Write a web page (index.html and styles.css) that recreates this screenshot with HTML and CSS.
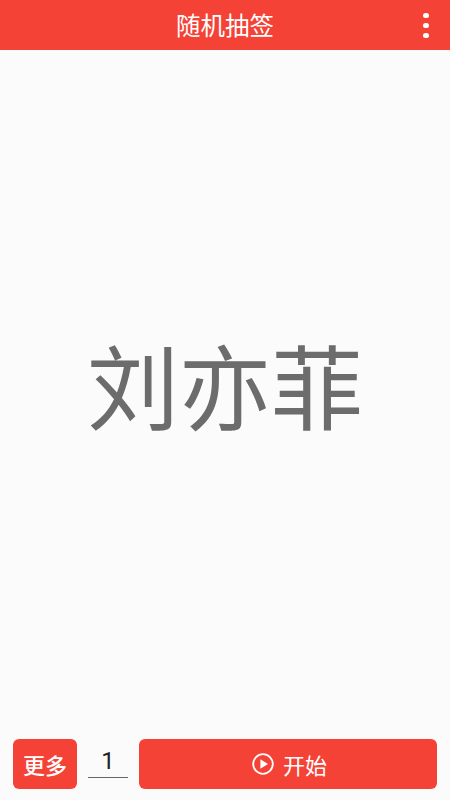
FILE: index.html
```html
<!DOCTYPE html>
<html lang="zh-CN">
<head>
    <meta charset="UTF-8">
    <meta name="viewport" content="width=device-width, initial-scale=1.0">
    <title>随机抽签</title>
    <link rel="stylesheet" href="styles.css">
</head>
<body>
<div class="app">
    <div class="topbar">
        <span class="title">随机抽签</span>
        <button class="menu">
            <i class="dot"></i>
            <i class="dot"></i>
            <i class="dot"></i>
        </button>
    </div>
    <div class="result">
        <p class="name">刘亦菲</p>
    </div>
    <div class="bottom">
        <button class="more">更多</button>
        <div class="count">1</div>
        <button class="start">
            <svg class="play" viewBox="0 0 22 22" width="22" height="22">
                <circle cx="11" cy="11" r="9.8" fill="none" stroke="#fff" stroke-width="1.8"/>
                <path d="M8.4 6.2 L16 11 L8.4 15.8 Z" fill="#fff"/>
            </svg>
            <span>开始</span>
        </button>
    </div>
</div>
</body>
</html>
```

FILE: styles.css
```css
*{
    padding: 0;
    margin: 0;
    box-sizing: border-box;
}
body{
    background-color: #fbfbfb;
    font-family: "Noto Sans CJK SC", "Noto Sans", sans-serif;
}
.app{
    width: 100vw;
    height: 100vh;
    display: flex;
    flex-direction: column;
}
.topbar{
    height: 50px;
    flex-shrink: 0;
    background-color: #f44336;
    display: flex;
    justify-content: center;
    align-items: center;
    position: relative;
}
.title{
    color: #fff;
    font-size: 24.5px;
    line-height: 50px;
}
.menu{
    position: absolute;
    right: 15px;
    top: 12.5px;
    width: 18px;
    background: none;
    border: none;
    display: flex;
    flex-direction: column;
    align-items: center;
    gap: 4.5px;
}
.dot{
    width: 5.5px;
    height: 5.5px;
    border-radius: 50%;
    background-color: #fff;
}
.result{
    flex: 1;
    display: flex;
    justify-content: center;
    align-items: center;
    padding-bottom: 23px;
}
.name{
    color: #6c6c6c;
    font-size: 92px;
    line-height: 100px;
}
.bottom{
    height: 61px;
    flex-shrink: 0;
    padding: 0 13px 11px 13px;
    display: flex;
    align-items: stretch;
}
.more{
    width: 64px;
    border: none;
    border-radius: 6px;
    background-color: #f44336;
    color: #fff;
    font-family: inherit;
    font-size: 22px;
    font-weight: 500;
}
.count{
    width: 40px;
    margin: 0 11px;
    height: 39px;
    border-bottom: 1px solid #666;
    color: #222;
    font-size: 24px;
    line-height: 44px;
    text-align: center;
    font-family: "Roboto", sans-serif;
}
.start{
    flex: 1;
    border: none;
    border-radius: 6px;
    background-color: #f44336;
    color: #fff;
    font-family: inherit;
    font-size: 22px;
    display: flex;
    justify-content: center;
    align-items: center;
    gap: 9px;
    padding-left: 3px;
}
```
